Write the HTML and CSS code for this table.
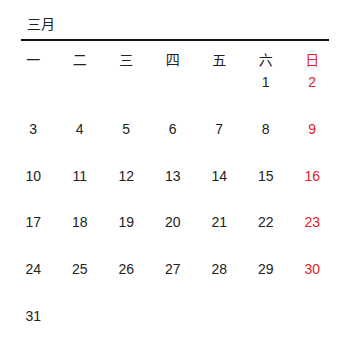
FILE: index.html
```html
<!DOCTYPE html>
<html lang="zh">
<head>
<meta charset="utf-8">
<link rel="stylesheet" href="styles.css">
</head>
<body>
<div class="calendar">
  <div class="month-title">三月</div>
  <div class="weekdays">
    <div>一</div><div>二</div><div>三</div><div>四</div><div>五</div><div>六</div><div class="sun">日</div>
  </div>
  <div class="days">
    <div></div><div></div><div></div><div></div><div></div><div>1</div><div class="sun">2</div>
    <div>3</div><div>4</div><div>5</div><div>6</div><div>7</div><div>8</div><div class="sun">9</div>
    <div>10</div><div>11</div><div>12</div><div>13</div><div>14</div><div>15</div><div class="sun">16</div>
    <div>17</div><div>18</div><div>19</div><div>20</div><div>21</div><div>22</div><div class="sun">23</div>
    <div>24</div><div>25</div><div>26</div><div>27</div><div>28</div><div>29</div><div class="sun">30</div>
    <div>31</div>
  </div>
</div>
</body>
</html>
```

FILE: styles.css
```css
html, body {
  margin: 0;
  padding: 0;
  background: #fff;
}
body {
  font-family: "Liberation Sans", "Noto Sans CJK SC", sans-serif;
  font-size: 14px;
  color: #222;
}
.calendar {
  padding-top: 14px;
}
.month-title {
  margin-left: 21px;
  width: 308px;
  padding-left: 6px;
  box-sizing: border-box;
  line-height: 20px;
  height: 27px;
  border-bottom: 2px solid #111;
}
.weekdays,
.days {
  margin-left: 10px;
  display: grid;
  grid-template-columns: repeat(7, 46.5px);
  grid-auto-rows: 20px;
}
.weekdays {
  margin-top: 9px;
}
.days {
  margin-top: 2px;
  row-gap: 26.8px;
}
.weekdays > div,
.days > div {
  text-align: center;
  line-height: 20px;
}
.sun {
  color: #e0202a;
}
```
